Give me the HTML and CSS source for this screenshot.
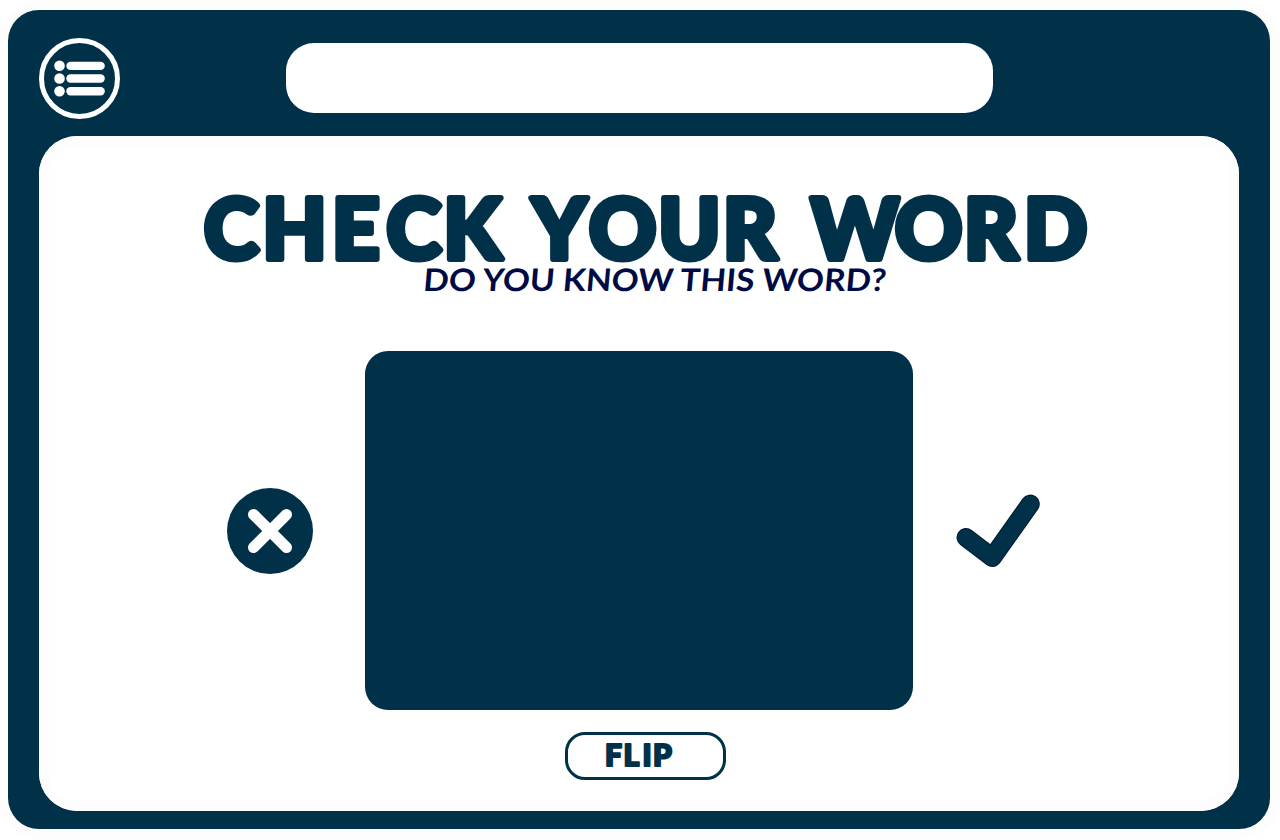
FILE: index.html
```html
<!DOCTYPE html>
<html lang="en">
<head>
<meta charset="utf-8">
<title>Check Your Word</title>
<link rel="stylesheet" href="styles.css">
</head>
<body>
<div class="frame">
  <header class="topbar">
    <button class="menu" aria-label="Menu">
      <svg viewBox="0 0 81 81" width="81" height="81">
        <circle class="ring" cx="40.5" cy="40.5" r="38"/>
        <g class="solid">
          <circle cx="20.5" cy="27.7" r="5.3"/>
          <circle cx="20.5" cy="40.5" r="5.3"/>
          <circle cx="20.5" cy="53.2" r="5.3"/>
          <rect x="27.3" y="23.7" width="38.5" height="8.4" rx="4.2"/>
          <rect x="27.3" y="36.3" width="38.5" height="8.4" rx="4.2"/>
          <rect x="27.3" y="49" width="38.5" height="8.4" rx="4.2"/>
        </g>
      </svg>
    </button>
    <div class="search"></div>
  </header>
  <main class="panel">
    <svg class="heading" viewBox="190 180 910 125" width="910" height="125">
      <text class="title" y="258.5" x="204 262.5 332 386.5 443.5 500 532 589 658.5 723 790 811 895 964 1024">CHECK YOUR WORD</text>
      <text class="subtitle" transform="translate(422.5 291) skewX(-5)" textLength="463" lengthAdjust="spacingAndGlyphs">DO YOU KNOW THIS WORD?</text>
    </svg>
    <div class="quiz">
      <button class="answer" aria-label="No">
        <svg viewBox="0 0 86 86" width="86" height="86">
          <circle class="disc" cx="43" cy="43" r="43"/>
          <path class="cross" d="M26.5 26.5 59.5 59.5M59.5 26.5 26.5 59.5"/>
        </svg>
      </button>
      <div class="card"></div>
      <button class="answer" aria-label="Yes">
        <svg viewBox="955 488 86 86" width="86" height="86">
          <path class="check-edge" d="M966 537.5 992.3 557.5 1030.3 504"/>
          <path class="check" d="M966 537.5 992.3 557.5 1030.3 504"/>
        </svg>
      </button>
    </div>
    <button class="flip">
      <svg viewBox="600 738 80 36" width="80" height="36"><text class="flip-label" y="765.5" x="605 623.5 642.5 653">FLIP</text></svg>
    </button>
  </main>
</div>
</body>
</html>
```
FILE: styles.css
```css
* { box-sizing: border-box; }
body { margin: 0; background: #fff; font-family: Lato, sans-serif; overflow: hidden; }
button { padding: 0; border: 0; background: none; }
svg { display: block; overflow: visible; }
.frame {
  width: 1262px; height: 819px; margin: 10px 10px 11px 8px;
  padding: 28px 31px 18px; border-radius: 31px;
  background: #003149; box-shadow: 0 0 0 10px #fdfdfd;
}
.topbar { display: flex; align-items: flex-start; gap: 166px; height: 98px; }
.search { width: 707px; height: 70px; margin-top: 5px; border-radius: 28px; background: #fff; }
.ring { fill: none; stroke: #fff; stroke-width: 5; }
.solid { fill: #fff; }
.panel {
  display: flex; flex-direction: column; height: 675px; padding-top: 44px;
  border-radius: 38px; background: #fff; box-shadow: inset 0 0 0 10px #fdfdfd;
}
.heading { margin-left: 151px; flex: none; }
.title {
  font-size: 83px; font-weight: 900; fill: #003149;
  stroke: #003149; stroke-width: 6; stroke-linejoin: round;
}
.subtitle { font-size: 31px; font-weight: 700; fill: #000b45; }
.quiz { display: flex; align-items: center; margin: 46px 0 0 188px; }
.card { width: 548px; height: 359px; margin: 0 42px 0 52px; border-radius: 23px; background: #003149; }
.disc { fill: #003149; }
.cross { fill: none; stroke: #fff; stroke-width: 11; stroke-linecap: round; }
.check, .check-edge { fill: none; stroke-linecap: round; stroke-linejoin: round; }
.check-edge { stroke: #001a30; stroke-width: 19; }
.check { stroke: #003149; stroke-width: 17; }
.flip {
  display: flex; align-items: center; width: 161px; height: 48px;
  margin: 22px 0 0 526px; padding-left: 32px;
  border: 3px solid #003149; border-radius: 20px;
}
.flip-label {
  font-family: Lato, sans-serif; font-size: 30px; font-weight: 900;
  fill: #003149; stroke: #003149; stroke-width: 2.2; stroke-linejoin: round;
}
```
